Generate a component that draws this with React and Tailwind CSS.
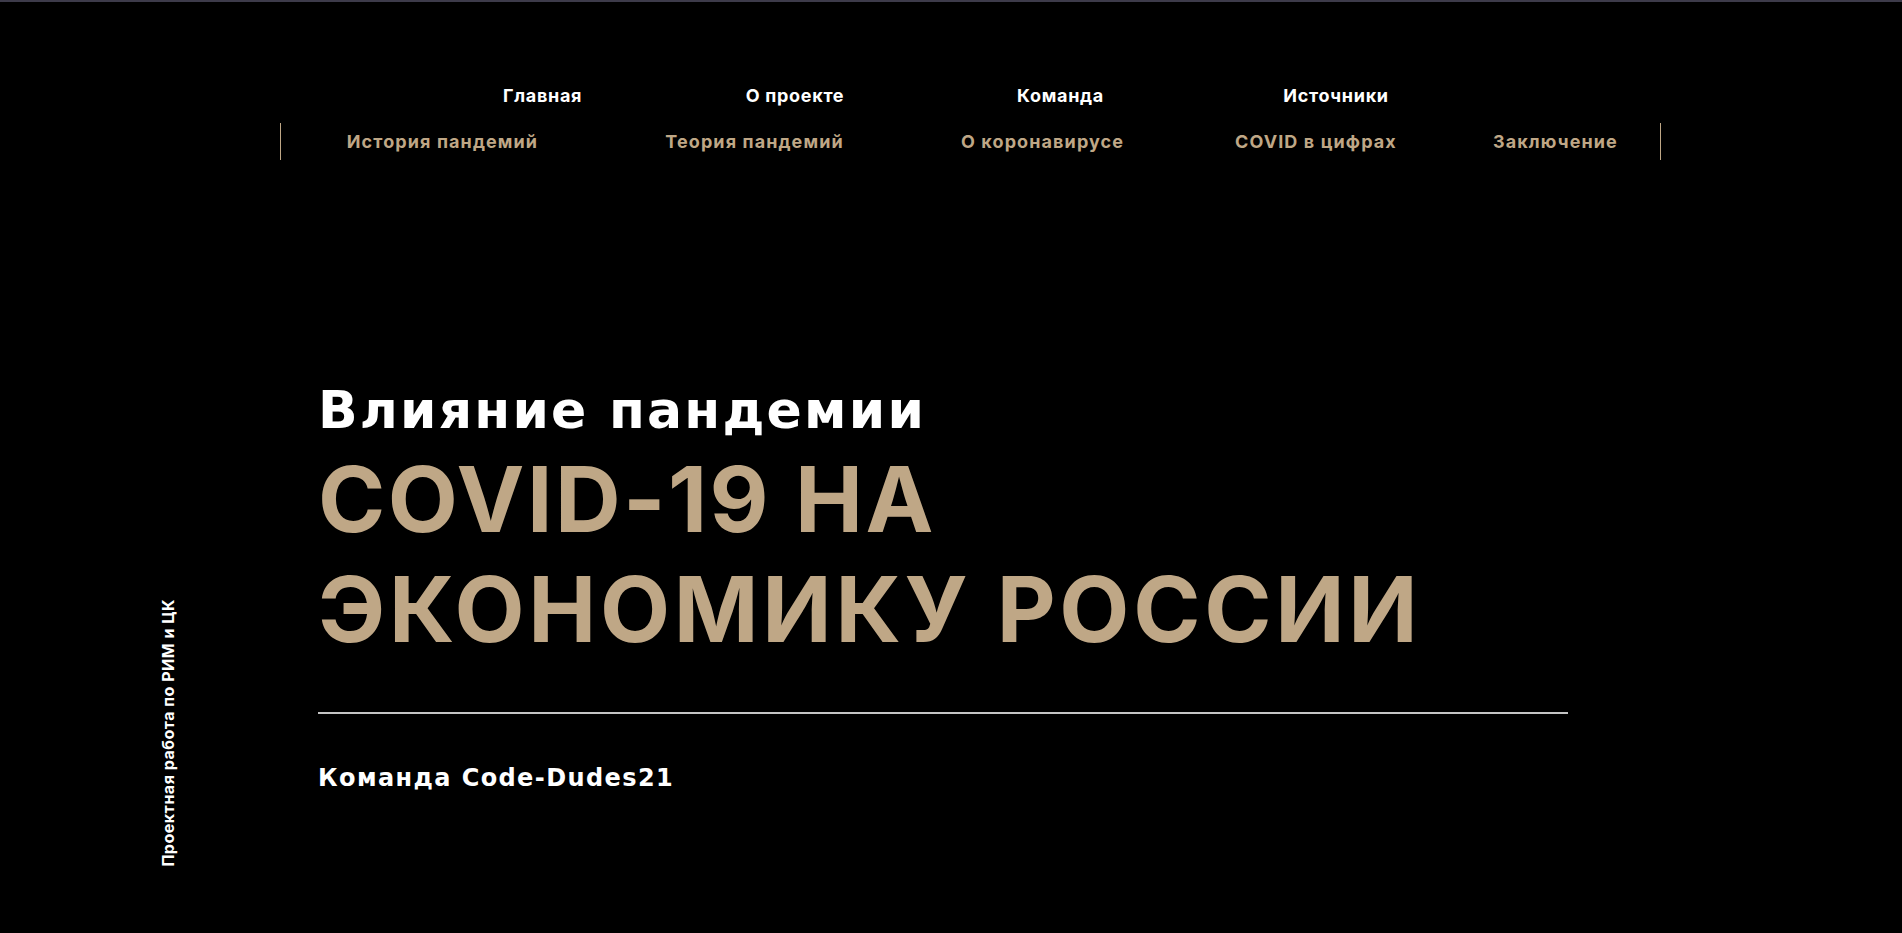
import React from "react";

const inter = { fontFamily: "Inter, 'Noto Sans', sans-serif" };
const wide = { fontFamily: "'DejaVu Sans', 'Noto Sans', sans-serif" };

const top = [
  { t: "Главная", c: "w-[79px]" },
  { t: "О проекте", c: "w-[104px] ml-[161px]" },
  { t: "Команда", c: "w-[89px] ml-[169px]" },
  { t: "Источники", c: "w-[110px] ml-[176px]" },
];

const sub = [
  { t: "История пандемий", c: "w-[193px] ml-[65px]" },
  { t: "Теория пандемий", c: "w-[179px] ml-[126px]" },
  { t: "О коронавирусе", c: "w-[163px] ml-[117px]" },
  { t: "COVID в цифрах", c: "w-[161px] ml-[111px]" },
  { t: "Заключение", c: "w-[124px] ml-[97px]" },
];

export default function App() {
  return (
    <div className="w-full h-[933px] bg-black overflow-hidden flex flex-col" style={inter}>
      <div className="h-[2px] bg-[#3d3b4a] shrink-0" />
      <nav className="flex flex-col pt-[83px]">
        <ul className="flex ml-[503px] text-white text-[18px] leading-[22px] font-bold tracking-[0.7px]">
          {top.map((i) => (
            <li key={i.t} className={`${i.c} text-center whitespace-nowrap`}>
              {i.t}
            </li>
          ))}
        </ul>
        <ul className="mt-[16px] ml-[280px] w-[1381px] h-[37px] border-l border-r border-[#bfa786] flex items-center text-[#bfa786] text-[18px] leading-[22px] font-bold tracking-[1.1px]">
          {sub.map((i) => (
            <li key={i.t} className={`${i.c} text-center whitespace-nowrap`}>
              {i.t}
            </li>
          ))}
        </ul>
      </nav>
      <div className="flex flex-1">
        <div className="w-[318px] shrink-0 flex items-end pl-[159px] pb-[66px]">
          <span className="[writing-mode:vertical-rl] rotate-180 text-white text-[16px] leading-[18px] font-bold tracking-[0.5px] whitespace-nowrap">
            Проектная работа по РИМ и ЦК
          </span>
        </div>
        <section className="w-[1250px] pt-[217px]">
          <h1 className="font-bold">
            <span className="block text-white text-[52px] leading-[66px] tracking-[2.2px]" style={wide}>
              Влияние пандемии
            </span>
            <span className="block mt-[1px] text-[#bfa786] text-[91px] leading-[110px] tracking-[2.4px]">COVID-19 НА</span>
            <span className="block text-[#bfa786] text-[91px] leading-[110px] tracking-[3.7px]">ЭКОНОМИКУ РОССИИ</span>
          </h1>
          <div className="mt-[48px] h-[2px] bg-[#c4c4c4]" />
          <p className="mt-[49px] text-white text-[24px] leading-[30px] font-bold tracking-[1.4px]" style={wide}>
            Команда Code-Dudes21
          </p>
        </section>
      </div>
    </div>
  );
}
